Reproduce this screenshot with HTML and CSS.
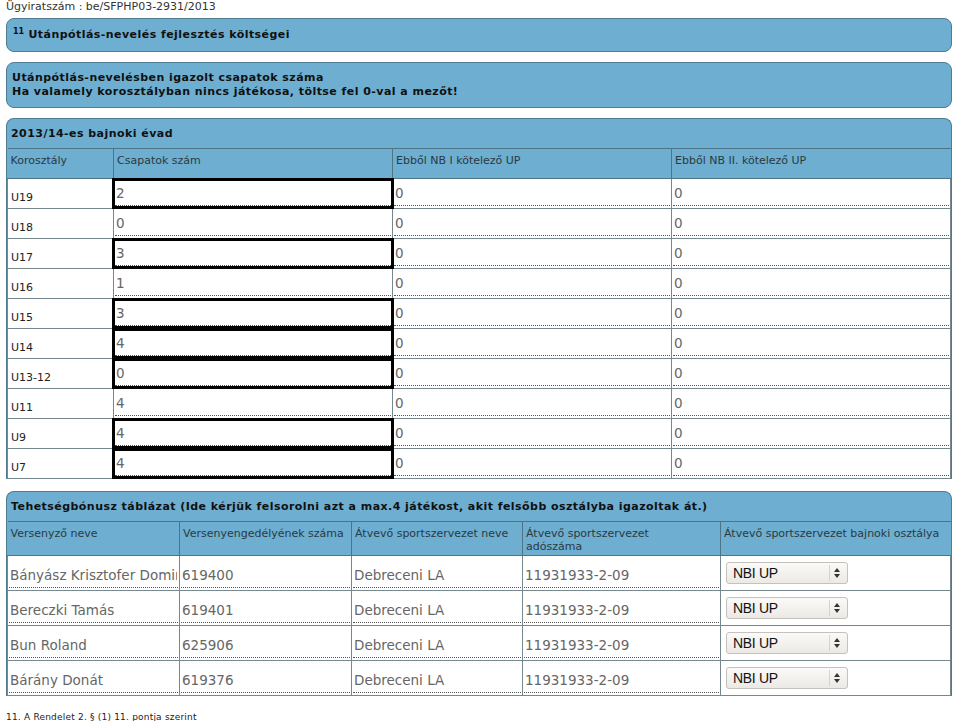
FILE: index.html
```html
<!DOCTYPE html>
<html lang="hu">
<head>
<meta charset="UTF-8">
<title>Utánpótlás-nevelés fejlesztés költségei</title>
<link rel="stylesheet" href="styles.css">
</head>
<body>

<div class="docnum">Ügyiratszám : be/SFPHP03-2931/2013</div>

<div class="panel">
    <div class="title first"><sup>11</sup> Utánpótlás-nevelés fejlesztés költségei</div>
</div>

<div class="panel">
    <div class="title">Utánpótlás-nevelésben igazolt csapatok száma<br>Ha valamely korosztályban nincs játékosa, töltse fel 0-val a mezőt!</div>
</div>

<div class="panel boxed">
    <div class="title">2013/14-es bajnoki évad</div>
    <table class="grid teams">
        <colgroup>
            <col style="width:106px"><col><col><col>
        </colgroup>
        <tr class="head">
            <th>Korosztály</th>
            <th>Csapatok szám</th>
            <th>Ebből NB I kötelező UP</th>
            <th>Ebből NB II. kötelező UP</th>
        </tr>
        <tr><td class="age">U19</td><td><input class="field changed" value="2"></td><td><input class="field" value="0"></td><td><input class="field" value="0"></td></tr>
        <tr><td class="age">U18</td><td><input class="field" value="0"></td><td><input class="field" value="0"></td><td><input class="field" value="0"></td></tr>
        <tr><td class="age">U17</td><td><input class="field changed" value="3"></td><td><input class="field" value="0"></td><td><input class="field" value="0"></td></tr>
        <tr><td class="age">U16</td><td><input class="field" value="1"></td><td><input class="field" value="0"></td><td><input class="field" value="0"></td></tr>
        <tr><td class="age">U15</td><td><input class="field changed" value="3"></td><td><input class="field" value="0"></td><td><input class="field" value="0"></td></tr>
        <tr><td class="age">U14</td><td><input class="field changed" value="4"></td><td><input class="field" value="0"></td><td><input class="field" value="0"></td></tr>
        <tr><td class="age">U13-12</td><td><input class="field changed" value="0"></td><td><input class="field" value="0"></td><td><input class="field" value="0"></td></tr>
        <tr><td class="age">U11</td><td><input class="field" value="4"></td><td><input class="field" value="0"></td><td><input class="field" value="0"></td></tr>
        <tr><td class="age">U9</td><td><input class="field changed" value="4"></td><td><input class="field" value="0"></td><td><input class="field" value="0"></td></tr>
        <tr><td class="age">U7</td><td><input class="field changed" value="4"></td><td><input class="field" value="0"></td><td><input class="field" value="0"></td></tr>
    </table>
</div>

<div class="panel boxed">
    <div class="title">Tehetségbónusz táblázat (Ide kérjük felsorolni azt a max.4 játékost, akit felsőbb osztályba igazoltak át.)</div>
    <table class="grid players">
        <colgroup>
            <col style="width:172px"><col style="width:172px"><col style="width:171px"><col style="width:198px"><col>
        </colgroup>
        <tr class="head">
            <th>Versenyző neve</th>
            <th>Versenyengedélyének száma</th>
            <th>Átvevő sportszervezet neve</th>
            <th>Átvevő sportszervezet<br>adószáma</th>
            <th>Átvevő sportszervezet bajnoki osztálya</th>
        </tr>
        <tr>
            <td><input class="field" value="Bányász Krisztofer Dominik"></td>
            <td><input class="field" value="619400"></td>
            <td><input class="field" value="Debreceni LA"></td>
            <td><input class="field" value="11931933-2-09"></td>
            <td><span class="pick"><select><option>NBI UP</option></select><svg class="arrows" width="8" height="12" viewBox="0 0 8 12"><path d="M4 1L7 5H1z M4 11L1 7h6z" fill="#333"/></svg></span></td>
        </tr>
        <tr>
            <td><input class="field" value="Bereczki Tamás"></td>
            <td><input class="field" value="619401"></td>
            <td><input class="field" value="Debreceni LA"></td>
            <td><input class="field" value="11931933-2-09"></td>
            <td><span class="pick"><select><option>NBI UP</option></select><svg class="arrows" width="8" height="12" viewBox="0 0 8 12"><path d="M4 1L7 5H1z M4 11L1 7h6z" fill="#333"/></svg></span></td>
        </tr>
        <tr>
            <td><input class="field" value="Bun Roland"></td>
            <td><input class="field" value="625906"></td>
            <td><input class="field" value="Debreceni LA"></td>
            <td><input class="field" value="11931933-2-09"></td>
            <td><span class="pick"><select><option>NBI UP</option></select><svg class="arrows" width="8" height="12" viewBox="0 0 8 12"><path d="M4 1L7 5H1z M4 11L1 7h6z" fill="#333"/></svg></span></td>
        </tr>
        <tr>
            <td><input class="field" value="Bárány Donát"></td>
            <td><input class="field" value="619376"></td>
            <td><input class="field" value="Debreceni LA"></td>
            <td><input class="field" value="11931933-2-09"></td>
            <td><span class="pick"><select><option>NBI UP</option></select><svg class="arrows" width="8" height="12" viewBox="0 0 8 12"><path d="M4 1L7 5H1z M4 11L1 7h6z" fill="#333"/></svg></span></td>
        </tr>
    </table>
</div>

<div class="footnote">11. A Rendelet 2. § (1) 11. pontja szerint</div>

</body>
</html>
```

FILE: styles.css
```css
/* Page */
body {
    margin: 0 8px 0 6px;
    font-family: "DejaVu Sans", sans-serif;
    font-size: 11px;
    color: #333;
    background: #fff;
}
.docnum {
    line-height: 13px;
    margin-bottom: 5px;
}

/* Blue panels */
.panel {
    background: #6daed1;
    border: 1px solid #4f7c90;
    border-radius: 8px;
    margin-bottom: 10px;
}
.panel.boxed {
    border-radius: 8px 8px 0 0;
    border-bottom: none;
    margin-bottom: 12px;
}
.title {
    padding: 8px 5px;
    font-size: 11px;
    font-weight: bold;
    letter-spacing: 0.45px;
    line-height: 14px;
    color: #111;
}
.title.first {
    padding-top: 9px;
    padding-bottom: 9px;
}
.title sup {
    font-size: 8px;
    line-height: 0;
    letter-spacing: 0;
    vertical-align: 4px;
    margin-left: 1px;
}
.boxed .title {
    padding: 8px 5px 7px 4px;
}

/* Tables */
.grid {
    width: 100%;
    border-collapse: collapse;
    table-layout: fixed;
}
.grid th {
    font-weight: normal;
    font-size: 11px;
    line-height: 13px;
    text-align: left;
    vertical-align: top;
    color: #2b3a40;
    padding: 5px 3px 2px;
    border: 1px solid #4d7587;
}
.grid th:first-child { border-left: none; }
.grid th:last-child { border-right: none; }
.teams .head { height: 30px; }
.grid td {
    background: #fff;
    border: 1px solid #76878e;
    padding: 2px 1px;
    vertical-align: bottom;
}
.grid td.age {
    font-size: 11px;
    padding: 0 3px 4px;
    color: #222;
}
.players td {
    padding: 6px 1px 2px;
}

/* Inputs */
.field {
    display: block;
    width: 100%;
    box-sizing: border-box;
    height: 25px;
    margin: 0;
    padding: 0 1px;
    border: none;
    border-bottom: 1px dotted #555;
    background: transparent;
    font-family: "DejaVu Sans", sans-serif;
    font-size: 13.5px;
    color: #666;
}
.field.changed {
    outline: 3px solid #000;
}

/* Select */
.pick {
    position: relative;
    display: block;
    width: 122px;
    margin: 0 0 4px 4px;
}
.pick select {
    display: block;
    width: 122px;
    height: 22px;
    -webkit-appearance: none;
    appearance: none;
    border: 1px solid #c5c2bd;
    border-radius: 3px;
    background: linear-gradient(#fbfaf8, #ece9e5);
    font-family: "Liberation Sans", Arial, sans-serif;
    font-size: 14px;
    letter-spacing: -0.3px;
    color: #111;
    padding: 0 6px;
}
.pick::after {
    content: "";
    position: absolute;
    right: 18px;
    top: 3px;
    bottom: 3px;
    border-left: 1px solid #d6d3ce;
}
.pick .arrows {
    position: absolute;
    right: 7px;
    top: 5px;
}

/* Footnote */
.footnote {
    margin-top: 16px;
    font-size: 9px;
    letter-spacing: 0.2px;
    color: #222;
}
```
